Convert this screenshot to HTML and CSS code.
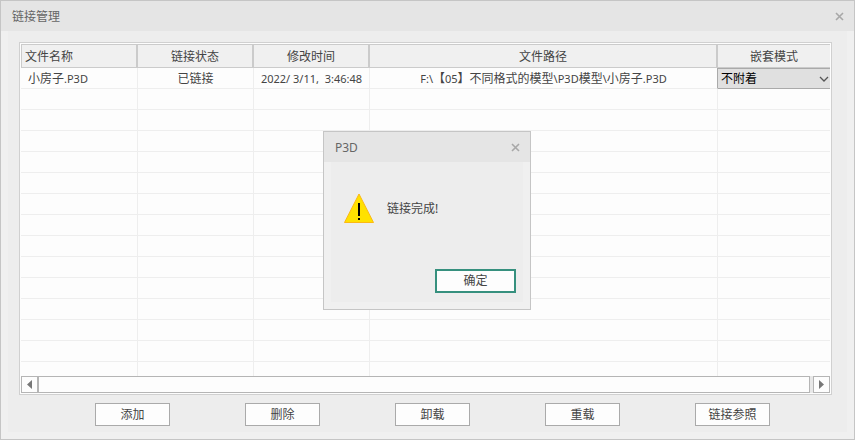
FILE: index.html
```html
<!DOCTYPE html>
<html lang="zh-CN">

<head>
    <meta charset="utf-8">
    <meta name="viewport" content="width=device-width, initial-scale=1">
    <title>链接管理</title>
    <link rel="stylesheet" href="styles.css">
</head>

<body>
    <div class="window">
        <div class="titlebar">
            <h1>链接管理</h1>
            <button type="button" class="close" aria-label="关闭">
                <svg width="9" height="9" viewBox="0 0 9 9"><path d="M1 1l7 7M8 1l-7 7" /></svg>
            </button>
        </div>
        <div class="content">
            <div class="panel">
                <div class="rows">
                    <table class="links">
                        <colgroup>
                            <col class="col-name">
                            <col class="col-status">
                            <col class="col-time">
                            <col class="col-path">
                            <col class="col-mode">
                        </colgroup>
                        <thead>
                            <tr>
                                <th>文件名称</th>
                                <th>链接状态</th>
                                <th>修改时间</th>
                                <th>文件路径</th>
                                <th>嵌套模式</th>
                            </tr>
                        </thead>
                        <tbody>
                            <tr class="filled">
                                <td>小房子<span class="en">.P3D</span></td>
                                <td>已链接</td>
                                <td class="en">2022/ 3/11,&nbsp; 3:46:48</td>
                                <td><span class="en">F:\</span>【<span class="en">05</span>】不同格式的模型<span class="en">\P3D</span>模型<span class="en">\</span>小房子<span class="en">.P3D</span></td>
                                <td>
                                    <div class="mode">
                                        <select aria-label="嵌套模式">
                                            <option>不附着</option>
                                        </select>
                                        <svg width="10" height="6" viewBox="0 0 10 6"><path d="M1 1l4 4 4-4" /></svg>
                                    </div>
                                </td>
                            </tr>
                            <tr><td></td><td></td><td></td><td></td><td></td></tr>
                            <tr><td></td><td></td><td></td><td></td><td></td></tr>
                            <tr><td></td><td></td><td></td><td></td><td></td></tr>
                            <tr><td></td><td></td><td></td><td></td><td></td></tr>
                            <tr><td></td><td></td><td></td><td></td><td></td></tr>
                            <tr><td></td><td></td><td></td><td></td><td></td></tr>
                            <tr><td></td><td></td><td></td><td></td><td></td></tr>
                            <tr><td></td><td></td><td></td><td></td><td></td></tr>
                            <tr><td></td><td></td><td></td><td></td><td></td></tr>
                            <tr><td></td><td></td><td></td><td></td><td></td></tr>
                            <tr><td></td><td></td><td></td><td></td><td></td></tr>
                            <tr><td></td><td></td><td></td><td></td><td></td></tr>
                            <tr><td></td><td></td><td></td><td></td><td></td></tr>
                            <tr><td></td><td></td><td></td><td></td><td></td></tr>
                        </tbody>
                    </table>
                </div>
                <div class="scrollbar">
                    <button type="button" class="arrow" aria-label="向左滚动">
                        <svg width="5" height="9" viewBox="0 0 5 9"><path d="M5 0v9L0 4.5z" /></svg>
                    </button>
                    <div class="thumb"></div>
                    <button type="button" class="arrow" aria-label="向右滚动">
                        <svg width="5" height="9" viewBox="0 0 5 9"><path d="M0 0v9l5-4.5z" /></svg>
                    </button>
                </div>
            </div>
            <div class="actions">
                <button type="button">添加</button>
                <button type="button">删除</button>
                <button type="button">卸载</button>
                <button type="button">重载</button>
                <button type="button">链接参照</button>
            </div>
        </div>
    </div>

    <div class="overlay">
        <div class="dialog" role="dialog" aria-labelledby="dialog-title">
            <div class="titlebar">
                <h2 id="dialog-title">P3D</h2>
                <button type="button" class="close" aria-label="关闭">
                    <svg width="9" height="9" viewBox="0 0 9 9"><path d="M1 1l7 7M8 1l-7 7" /></svg>
                </button>
            </div>
            <div class="dialog-body">
                <div class="message">
                    <svg width="32" height="31" viewBox="0 0 32 31">
                        <path d="M16 1L30.5 29.5h-29z" fill="#ffe100" stroke="#fcb913" stroke-width="1" />
                        <path d="M15 10h2v13h-2zM15 25h2v2h-2z" fill="#000" />
                    </svg>
                    <p>链接完成!</p>
                </div>
                <button type="button" class="ok">确定</button>
            </div>
        </div>
    </div>
</body>

</html>
```
FILE: styles.css
```css
* {
    margin: 0;
    padding: 0;
    box-sizing: border-box;
}

body,
button,
select {
    font-family: "Noto Sans", "Noto Sans CJK SC", sans-serif;
    font-size: 12px;
    line-height: 16px;
    color: #444;
}

.window {
    display: flex;
    flex-direction: column;
    height: 100vh;
    border: 1px solid #c5c5c5;
    background-color: #f0f0f0;
}

.titlebar {
    display: flex;
    align-items: center;
    justify-content: space-between;
    height: 30px;
    padding: 0 10px 0 11px;
    background-color: #e5e5e5;
}

.titlebar h1,
.titlebar h2 {
    padding-top: 2px;
    font-size: 12px;
    font-weight: normal;
    color: #666;
}

.close {
    display: flex;
    border: none;
    background: none;
}

.close path {
    stroke: #a8a8a8;
    stroke-width: 1.6;
}

.content {
    display: flex;
    flex: 1;
    flex-direction: column;
    min-height: 0;
    margin: 0 7px 7px;
    padding: 11px 15px 6px 11px;
    background-color: #ededed;
}

.panel {
    display: flex;
    flex: 1;
    flex-direction: column;
    min-height: 0;
    padding: 1px;
    border: 1px solid #d0d0d0;
    background-color: #fdfdfd;
}

.rows {
    flex: 1;
    min-height: 0;
    overflow: hidden;
}

.links {
    width: 100%;
    table-layout: fixed;
    border-collapse: separate;
    border-spacing: 0;
}

.col-name {
    width: 117px;
}

.col-status,
.col-time {
    width: 116px;
}

.col-mode {
    width: 112px;
}

.links th {
    height: 24px;
    padding-top: 2px;
    border: 1px solid #cbcbcb;
    border-width: 1px 2px 1px 0;
    background-color: #f0f0f0;
    font-weight: normal;
}

.links th:first-child {
    padding-left: 3px;
    border-left-width: 1px;
    text-align: left;
}

.links th:last-child {
    border-right: none;
}

.links td {
    height: 21px;
    padding-top: 2px;
    border: 1px solid #eee;
    border-width: 0 1px 1px 0;
    text-align: center;
    white-space: nowrap;
}

.links td:first-child {
    padding-left: 7px;
    text-align: left;
}

.links td:last-child {
    padding-top: 0;
    border-right: none;
}

.links .filled td:last-child {
    border-bottom: none;
}

.links .filled td:nth-child(4) {
    border-right-color: #aaa;
}

.en {
    font-size: 11px;
}

.mode {
    display: grid;
    align-items: center;
}

.mode select,
.mode svg {
    grid-area: 1 / 1;
}

.mode select {
    width: 100%;
    height: 21px;
    padding: 1px 0 0 3px;
    border: 1px solid #aaa;
    border-width: 1px 0;
    border-radius: 0;
    background-color: #e0e0e0;
    color: #000;
    appearance: none;
}

.mode svg {
    justify-self: end;
    margin-right: 1px;
    pointer-events: none;
}

.mode path {
    fill: none;
    stroke: #555;
    stroke-width: 1.3;
}

.scrollbar {
    display: flex;
    height: 17px;
    background-color: #e8e8e8;
}

.arrow {
    display: flex;
    align-items: center;
    justify-content: center;
    width: 17px;
    border: 1px solid #b5b5b5;
    background-color: #fdfdfd;
}

.arrow path {
    fill: #777;
}

.thumb {
    flex: 1;
    margin-right: 3px;
    border: 1px solid #b5b5b5;
    background-color: #fdfdfd;
}

.actions {
    display: flex;
    justify-content: space-between;
    margin-top: 8px;
    padding: 0 62px 0 76px;
}

.actions button {
    width: 75px;
    height: 23px;
    border: 1px solid #aaa;
    background-color: #fdfdfd;
}

.overlay {
    position: fixed;
    inset: 0;
    display: flex;
    align-items: center;
    justify-content: center;
    padding: 1px 1px 0 0;
}

.dialog {
    width: 208px;
    border: 1px solid #c5c5c5;
    background-color: #f0f0f0;
}

.dialog-body {
    display: flex;
    flex-direction: column;
    align-items: flex-end;
    gap: 45px;
    margin: 0 7px 7px;
    padding: 31px 7px 9px 12px;
    background-color: #ededed;
}

.message {
    display: flex;
    align-items: center;
    gap: 12px;
    width: 100%;
}

.ok {
    width: 81px;
    height: 24px;
    border: 2px solid #36907e;
    background-color: #fdfdfd;
}
```
